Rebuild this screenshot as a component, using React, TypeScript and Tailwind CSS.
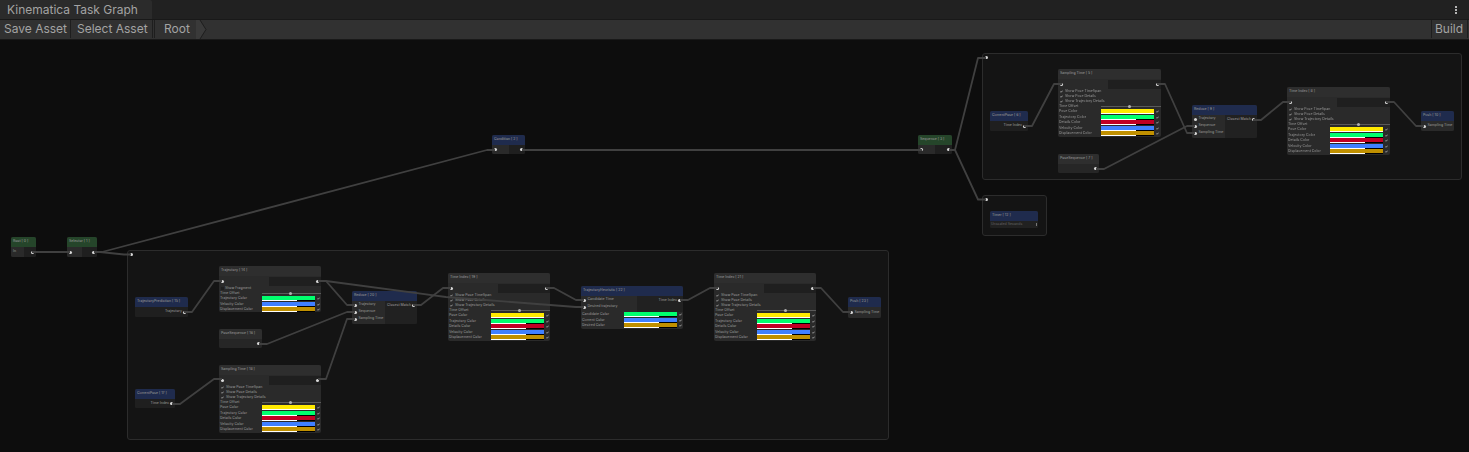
import type { ReactNode } from 'react'

const font = { fontFamily: 'Inter, "Liberation Sans", sans-serif' }

const YELLOW = 'bg-[#ffea00]'
const GREEN = 'bg-[#00ff6e]'
const RED = 'bg-[#c00024]'
const BLUE = 'bg-[#4080ff]'
const GOLD = 'bg-[#c09000]'

const timeColors = [
  { label: 'Pose Color', color: YELLOW, full: true },
  { label: 'Trajectory Color', color: GREEN },
  { label: 'Details Color', color: RED },
  { label: 'Velocity Color', color: BLUE },
  { label: 'Displacement Color', color: GOLD },
]

const wires = [
  'M32 252 H70',
  'M94 252 H100 L124 254.5 H131',
  'M94 252 H102 L487 150 H495',
  'M522 150 H922',
  'M949 150 H955 L978 58 H986',
  'M949 150 H955 L978 199.5 H986',
  'M184 312 H192 L214 281 H222',
  'M318 281 H326 L347 305 H355',
  'M318 281 H326 L446 297 L576 307 H584',
  'M259 344 H267 L347 312 H355',
  'M172 404 H180 L214 379 H222',
  'M318 379 H326 L347 319 H355',
  'M413 305 H421 L443 288 H451',
  'M546 288 H554 L576 300 H584',
  'M680 300 H688 L710 288 H718',
  'M813 288 H821 L843 312 H851',
  'M1024 126 H1032 L1054 84 H1062',
  'M1157 84 H1165 L1187 133 H1195',
  'M1096 169 H1104 L1187 126 H1195',
  'M1253 120 H1261 L1283 102 H1291',
  'M1386 102 H1394 L1416 126 H1424',
]

function Port() {
  return <span className="block w-[3px] h-[3px] shrink-0 rounded-full bg-[#d8d8d8]" />
}

function Tick() {
  return (
    <svg width="3" height="3" viewBox="0 0 4 4" className="shrink-0">
      <path d="M0.6 2.2 L1.5 3.1 L3.4 0.9" fill="none" stroke="#f0f0f0" strokeWidth="0.8" />
    </svg>
  )
}

function Node({
  className,
  title,
  head = 'bg-[#2e2e2e]',
  children,
}: {
  className: string
  title: string
  head?: string
  children: ReactNode
}) {
  return (
    <div className={`absolute flex flex-col overflow-hidden rounded-[2px] bg-[#2a2a2a] text-[3.5px] font-medium leading-none text-[#8c8c8c] ${className}`}>
      <div className={`flex h-[10px] shrink-0 items-center pl-[2px] text-[#8f8f8f] ${head}`}>{title}</div>
      {children}
    </div>
  )
}

function ColorRow({ label, color, full }: { label: string; color: string; full?: boolean }) {
  return (
    <div className="flex h-[5.6px] shrink-0 items-start pl-[1px]">
      <span className="w-[42px] shrink-0 whitespace-nowrap pt-[1px]">{label}</span>
      <div className="flex h-[5px] w-[53px] shrink-0 flex-col">
        <div className={`h-[4px] ${color}`} />
        <div className="flex h-[1px] bg-black">
          <div className={full ? 'w-full bg-white' : 'w-[35px] bg-white'} />
        </div>
      </div>
      <div className="flex w-[6px] justify-center pt-[1px]">
        <Tick />
      </div>
    </div>
  )
}

function PortRow() {
  return (
    <div className="flex h-[10px] shrink-0 items-center">
      <div className="flex w-[50px] pl-[2px]">
        <Port />
      </div>
      <div className="flex h-[9px] flex-1 items-center justify-end bg-[#1f1f1f] pr-[2px]">
        <Port />
      </div>
    </div>
  )
}

function Slider() {
  return (
    <div className="flex h-[5px] shrink-0 items-center pl-[1px]">
      <span className="w-[42px] shrink-0 whitespace-nowrap">Time Offset</span>
      <div className="relative h-[1px] flex-1 bg-[#5a5a5a]">
        <span className="absolute left-[27px] top-[-1px] h-[3px] w-[3px] rounded-full bg-[#b0b0b0]" />
      </div>
    </div>
  )
}

function TimeNode({ className, title }: { className: string; title: string }) {
  return (
    <Node className={className} title={title}>
      <PortRow />
      <div className="flex h-[15px] shrink-0 flex-col">
        {['Show Pose TimeSpan', 'Show Pose Details', 'Show Trajectory Details'].map((label) => (
          <div key={label} className="flex h-[5px] items-center gap-[2px] pl-[2px]">
            <Tick />
            <span className="whitespace-nowrap">{label}</span>
          </div>
        ))}
      </div>
      <Slider />
      {timeColors.map((c) => (
        <ColorRow key={c.label} {...c} />
      ))}
    </Node>
  )
}

function PoseNode({ className, title }: { className: string; title: string }) {
  return (
    <Node className={className} title={title}>
      <div className="flex flex-1 items-center justify-end pr-[2px] bg-[#262626]">
        <Port />
      </div>
    </Node>
  )
}

function OutputNode({ className, title, label }: { className: string; title: string; label: string }) {
  return (
    <Node className={className} title={title} head="bg-[#1f2b4d]">
      <div className="flex flex-1 items-center justify-end gap-[1px] bg-[#1f1f1f] pr-[2px]">
        <span>{label}</span>
        <Port />
      </div>
    </Node>
  )
}

function ReduceNode({ className, title }: { className: string; title: string }) {
  return (
    <Node className={className} title={title} head="bg-[#1f2b4d]">
      <div className="flex flex-1">
        <div className="flex w-[33px] flex-col gap-[4px] bg-[#2a2a2a] pl-[2px] pt-[2.5px]">
          {['Trajectory', 'Sequence', 'Sampling Time'].map((label) => (
            <div key={label} className="flex h-[3px] items-center gap-[1.5px] whitespace-nowrap">
              <Port />
              <span>{label}</span>
            </div>
          ))}
        </div>
        <div className="flex flex-1 items-start justify-end gap-[1px] bg-[#212121] pr-[2px] pt-[2.5px]">
          <span className="whitespace-nowrap">Closest Match</span>
          <Port />
        </div>
      </div>
    </Node>
  )
}

function PushNode({ className, title }: { className: string; title: string }) {
  return (
    <Node className={className} title={title} head="bg-[#1f2b4d]">
      <div className="flex flex-1 items-center gap-[1.5px] bg-[#2a2a2a] pl-[2px]">
        <Port />
        <span className="whitespace-nowrap">Sampling Time</span>
      </div>
    </Node>
  )
}

function FlowNode({ className, title, head, label }: { className: string; title: string; head: string; label?: string }) {
  return (
    <Node className={className} title={title} head={head}>
      <div className="flex flex-1">
        <div className="flex flex-1 items-center bg-[#2a2a2a] pl-[2px]">{label ? <span>{label}</span> : <Port />}</div>
        <div className="flex flex-1 items-center justify-end bg-[#1f1f1f] pr-[2px]">
          <Port />
        </div>
      </div>
    </Node>
  )
}

function Group({ className }: { className: string }) {
  return (
    <div className={`absolute rounded-[3px] border border-[#2c2c2c] bg-[#141414] ${className}`}>
      <div className="absolute left-[2px] top-[2px]">
        <Port />
      </div>
    </div>
  )
}

export default function App() {
  return (
    <div className="flex h-[452px] w-[1469px] flex-col overflow-hidden bg-[#0d0d0d]" style={font}>
      <div className="flex h-[19px] shrink-0 items-stretch justify-between bg-[#212121]">
        <div className="flex w-[152px] items-center whitespace-nowrap rounded-tr-[2px] bg-[#2b2b2b] pl-[7px] text-[12px] text-[#a3a3a3]">
          Kinematica Task Graph
        </div>
        <div className="flex w-[26px] flex-col items-center justify-center gap-[1px]">
          <span className="h-[2px] w-[2px] bg-[#b4b4b4]" />
          <span className="h-[2px] w-[2px] bg-[#b4b4b4]" />
          <span className="h-[2px] w-[2px] bg-[#b4b4b4]" />
        </div>
      </div>
      <div className="flex h-[21px] shrink-0 items-stretch whitespace-nowrap border-y border-[#191919] bg-[#313131] pb-[1px] text-[12px] text-[#a3a3a3]">
        <div className="flex w-[71px] items-center border-r border-[#1e1e1e] pl-[4px]">Save Asset</div>
        <div className="ml-[1px] flex w-[81px] items-center border-r border-[#1e1e1e] pl-[5px]">Select Asset</div>
        <div className="ml-[1px] flex items-center border-l border-[#1e1e1e] pl-[9px]">Root</div>
        <svg width="14" height="19" viewBox="0 0 14 19" className="ml-[6px]">
          <path d="M0 0 L4 0 L10 9.5 L4 19 L0 19 Z" fill="#3a3a3a" />
          <path d="M4 0 L10 9.5 L4 19" fill="none" stroke="#1e1e1e" />
        </svg>
        <div className="flex-1" />
        <div className="flex w-[37px] items-center border-x border-[#1e1e1e] pl-[3px]">Build</div>
        <div className="w-[1px]" />
      </div>

      <div className="relative flex-1 blur-[0.3px]">
        <Group className="left-[127px] top-[210px] h-[190px] w-[762px]" />
        <Group className="left-[982px] top-[13px] h-[127px] w-[480px]" />
        <Group className="left-[982px] top-[155px] h-[41px] w-[65px]" />

        <FlowNode className="left-[11px] top-[197px] h-[20px] w-[25px]" title="Root [ 0 ]" head="bg-[#25452a]" label="In" />
        <FlowNode className="left-[67px] top-[197px] h-[20px] w-[30px]" title="Selector [ 1 ]" head="bg-[#25452a]" />
        <FlowNode className="left-[492px] top-[95px] h-[19px] w-[33px]" title="Condition [ 2 ]" head="bg-[#1f2b4d]" />
        <FlowNode className="left-[918px] top-[95px] h-[19px] w-[34px]" title="Sequence [ 3 ]" head="bg-[#25452a]" />

        <Node className="left-[219px] top-[226px] h-[46px] w-[102px]" title="Trajectory [ 14 ]">
          <PortRow />
          <div className="flex h-[5px] shrink-0 items-center gap-[1px] pl-[2px]">
            <span className="h-[3px] w-[3px] bg-[#1f1f1f]" />
            <span>Show Fragment</span>
          </div>
          <Slider />
          <ColorRow label="Trajectory Color" color={GREEN} />
          <ColorRow label="Velocity Color" color={BLUE} />
          <ColorRow label="Displacement Color" color={GOLD} />
        </Node>
        <OutputNode className="left-[135px] top-[257px] h-[20px] w-[53px]" title="TrajectoryPrediction [ 15 ]" label="Trajectory" />
        <PoseNode className="left-[219px] top-[289px] h-[19px] w-[43px]" title="PoseSequence [ 16 ]" />
        <TimeNode className="left-[219px] top-[325px] h-[68px] w-[102px]" title="Sampling Time [ 18 ]" />
        <OutputNode className="left-[135px] top-[349px] h-[19px] w-[40px]" title="CurrentPose [ 17 ]" label="Time Index" />
        <ReduceNode className="left-[352px] top-[251px] h-[33px] w-[65px]" title="Reduce [ 20 ]" />
        <TimeNode className="left-[448px] top-[233px] h-[68px] w-[102px]" title="Time Index [ 19 ]" />
        <Node className="left-[581px] top-[246px] h-[43px] w-[102px]" title="TrajectoryHeuristic [ 22 ]" head="bg-[#1f2b4d]">
          <div className="flex h-[16px] shrink-0">
            <div className="flex w-[56px] flex-col gap-[4px] pl-[2px] pt-[2.5px]">
              {['Candidate Time', 'Desired trajectory'].map((label) => (
                <div key={label} className="flex h-[3px] items-center gap-[1.5px] whitespace-nowrap">
                  <Port />
                  <span>{label}</span>
                </div>
              ))}
            </div>
            <div className="flex flex-1 items-start justify-end gap-[1px] bg-[#212121] pr-[2px] pt-[2.5px]">
              <span className="whitespace-nowrap">Time Index</span>
              <Port />
            </div>
          </div>
          <ColorRow label="Candidate Color" color={GREEN} />
          <ColorRow label="Current Color" color={BLUE} />
          <ColorRow label="Desired Color" color={GOLD} />
        </Node>
        <TimeNode className="left-[714px] top-[233px] h-[68px] w-[102px]" title="Time Index [ 21 ]" />
        <PushNode className="left-[848px] top-[257px] h-[21px] w-[33px]" title="Push [ 23 ]" />

        <OutputNode className="left-[990px] top-[71px] h-[20px] w-[38px]" title="CurrentPose [ 6 ]" label="Time Index" />
        <TimeNode className="left-[1058px] top-[29px] h-[68px] w-[103px]" title="Sampling Time [ 5 ]" />
        <PoseNode className="left-[1058px] top-[114px] h-[19px] w-[41px]" title="PoseSequence [ 7 ]" />
        <ReduceNode className="left-[1192px] top-[65px] h-[33px] w-[65px]" title="Reduce [ 9 ]" />
        <TimeNode className="left-[1287px] top-[47px] h-[68px] w-[103px]" title="Time Index [ 8 ]" />
        <PushNode className="left-[1421px] top-[71px] h-[20px] w-[33px]" title="Push [ 10 ]" />
        <Node className="left-[990px] top-[171px] h-[17px] w-[48px]" title="Timer [ 12 ]" head="bg-[#1f2b4d]">
          <div className="flex flex-1 items-center justify-between bg-[#212121] px-[1px] text-[#5c5c5c]">
            <span className="whitespace-nowrap">Unscaled Seconds</span>
            <span className="h-[3px] w-[1px] bg-[#777777]" />
          </div>
        </Node>

        <svg className="pointer-events-none absolute inset-0" width="1469" height="412" viewBox="0 40 1469 412">
          {wires.map((d) => (
            <path key={d} d={d} fill="none" stroke="#404040" strokeWidth="1.8" strokeLinejoin="round" />
          ))}
        </svg>
      </div>
    </div>
  )
}
